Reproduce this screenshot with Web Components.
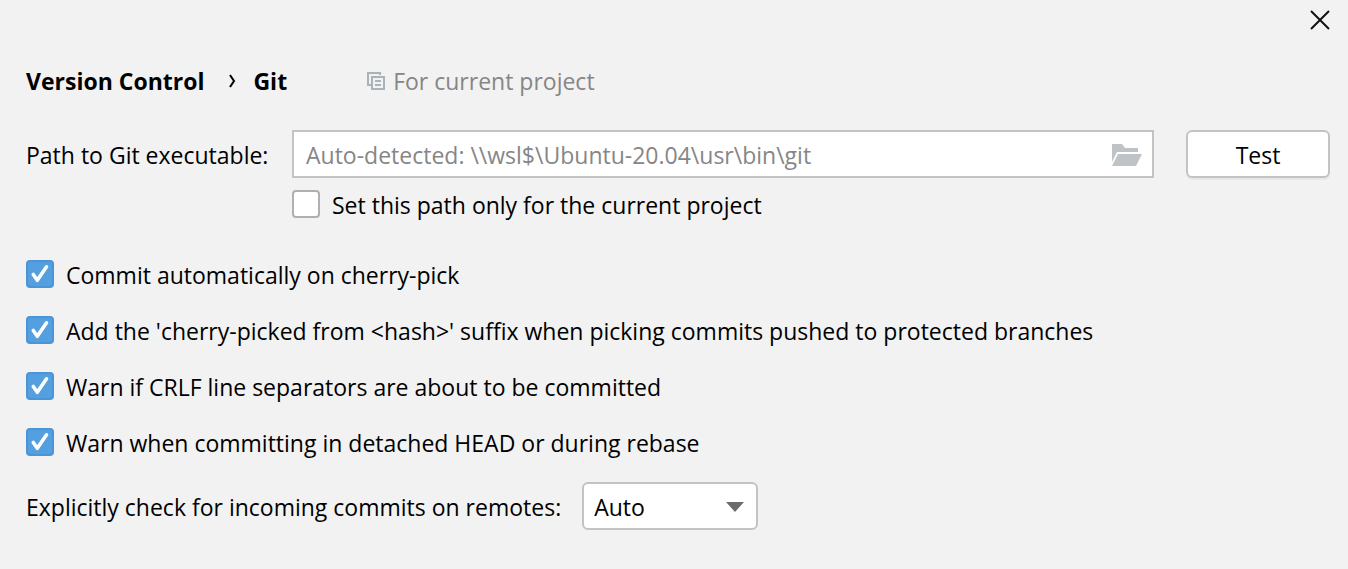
<!DOCTYPE html>
<html lang="en">
<head>
<meta charset="utf-8">
<title>Version Control – Git</title>
<style>
  html { background: #f2f2f2; }
  body { margin: 0; background: #f2f2f2; color: #000; font: 23px/30px "Open Sans", "Noto Sans", sans-serif; }
</style>
</head>
<body>
<git-settings></git-settings>
<script>
const define = (name, html, setup) => {
  const template = document.createElement('template');
  template.innerHTML = '<style>*{box-sizing:border-box}</style>' + html;
  customElements.define(name, class extends HTMLElement {
    constructor() {
      super();
      this.attachShadow({ mode: 'open' }).append(template.content.cloneNode(true));
    }
    connectedCallback() { if (setup) setup(this, this.shadowRoot); }
  });
};

define('close-button', `
  <style>
    :host { display: block; }
    button { display: block; width: 20px; height: 20px; padding: 0; border: 0; background: none; }
    svg { display: block; }
  </style>
  <button type="button" aria-label="Close">
    <svg width="20" height="20" viewBox="0 0 20 20" fill="none" stroke="#111" stroke-width="2"><path d="M1 1l18 18M19 1L1 19"/></svg>
  </button>`);

define('bread-crumbs', `
  <style>
    :host { display: flex; align-items: center; font-weight: 700; }
    svg { margin: 0 17px 0 25px; flex: none; }
  </style>
  <slot name="parent"></slot>
  <svg width="7" height="14" viewBox="0 0 7 14" fill="none" stroke="#000" stroke-width="2"><path d="M1 1l4 6-4 6"/></svg>
  <slot name="page"></slot>`);

define('scope-note', `
  <style>
    :host { display: flex; align-items: center; gap: 8px; color: #868686; }
    svg { flex: none; }
  </style>
  <svg width="18" height="18" viewBox="0 0 18 18" fill="none" stroke="#a9b4ba" stroke-width="2"><path d="M4 13H1V1h12v2M5 5h12v12H5zM8 9h6M8 13h6"/></svg>
  <slot></slot>`);

define('path-field', `
  <style>
    :host { display: contents; }
    label { padding-top: 2px; }
    .box { display: flex; align-items: center; min-width: 0; height: 48px; padding: 0 10px 0 12px; border: 2px solid #c3c3c3; background: #fff; }
    input { flex: 1; min-width: 0; height: 44px; padding: 2px 0 0; border: 0; outline: 0; background: none; font: inherit; color: #000; }
    input::placeholder { color: #868686; opacity: 1; }
    button { flex: none; padding: 2px 0 0; border: 0; background: none; }
    svg { display: block; }
  </style>
  <label for="path">Path to Git executable:</label>
  <div class="box">
    <input id="path" type="text">
    <button type="button" aria-label="Browse">
      <svg width="30" height="22" viewBox="0 0 30 22" fill="#bdc3c7"><path d="M0 0h10l3 4h13v4H5L0 18z"/><path d="M6 10h24l-6 12H0z"/></svg>
    </button>
  </div>`, (host, root) => { root.querySelector('input').placeholder = host.getAttribute('placeholder'); });

define('push-button', `
  <style>
    :host { display: block; }
    button { display: block; width: 100%; height: 48px; padding: 2px 0 0; border: 2px solid #c3c3c3; border-radius: 6px; background: #fff; box-shadow: 0 2px 0 #e8e8e8; font: inherit; color: #000; }
  </style>
  <button type="button"><slot></slot></button>`);

define('check-option', `
  <style>
    :host { display: block; }
    label { display: flex; align-items: center; gap: 12px; }
    .text { padding-top: 2px; }
    .mark { display: grid; flex: none; }
    input, svg { grid-area: 1 / 1; }
    input { appearance: none; width: 28px; height: 28px; margin: 0; border: 2px solid #b0b0b0; border-radius: 4px; background: #fff; }
    input:checked { border-color: #4b95d7; background: #549fe0; }
    svg { pointer-events: none; visibility: hidden; }
    input:checked + svg { visibility: visible; }
  </style>
  <label>
    <span class="mark">
      <input type="checkbox">
      <svg width="28" height="28" viewBox="0 0 28 28" fill="none" stroke="#fff" stroke-width="3.6" stroke-linecap="round" stroke-linejoin="round"><path d="M7.300 14.500L11.300 20.300L20.500 6.800"/></svg>
    </span>
    <span class="text"><slot></slot></span>
  </label>`, (host, root) => { root.querySelector('input').checked = host.hasAttribute('checked'); });

define('select-field', `
  <style>
    :host { display: flex; align-items: center; gap: 21px; }
    label { padding-top: 2px; }
    .box { display: grid; align-items: center; width: 176px; }
    select, svg { grid-area: 1 / 1; }
    select { appearance: none; width: 100%; height: 48px; margin: 0; padding: 2px 40px 0 10px; border: 2px solid #c3c3c3; border-radius: 6px; background: #fff; font: inherit; color: #000; }
    svg { justify-self: end; margin: 2px 14px 0 0; pointer-events: none; }
  </style>
  <label for="choice"><slot></slot></label>
  <div class="box">
    <select id="choice"><option>Auto</option><option>Always</option><option>Never</option></select>
    <svg width="18" height="10" viewBox="0 0 18 10" fill="#6b6b6b"><path d="M0 0h18L9 10z"/></svg>
  </div>`);

define('git-settings', `
  <style>
    :host { display: block; padding: 10px 18px 38px 26px; }
    .top { display: flex; justify-content: flex-end; }
    header { display: flex; align-items: center; gap: 80px; margin: 36px 0 34px; }
    .path { display: grid; grid-template-columns: 266px 1fr 176px; row-gap: 10px; align-items: center; }
    push-button { padding-left: 32px; }
    .only { grid-column: 2 / 4; }
    .options { display: grid; gap: 24px; margin: 38px 0 24px; }
  </style>
  <div class="top"><close-button></close-button></div>
  <header>
    <bread-crumbs><span slot="parent">Version Control</span><span slot="page">Git</span></bread-crumbs>
    <scope-note>For current project</scope-note>
  </header>
  <div class="path">
    <path-field placeholder="Auto-detected: \\\\wsl$\\Ubuntu-20.04\\usr\\bin\\git"></path-field>
    <push-button>Test</push-button>
    <check-option class="only">Set this path only for the current project</check-option>
  </div>
  <div class="options">
    <check-option checked>Commit automatically on cherry-pick</check-option>
    <check-option checked>Add the 'cherry-picked from &lt;hash&gt;' suffix when picking commits pushed to protected branches</check-option>
    <check-option checked>Warn if CRLF line separators are about to be committed</check-option>
    <check-option checked>Warn when committing in detached HEAD or during rebase</check-option>
  </div>
  <select-field>Explicitly check for incoming commits on remotes:</select-field>`);
</script>
</body>
</html>
